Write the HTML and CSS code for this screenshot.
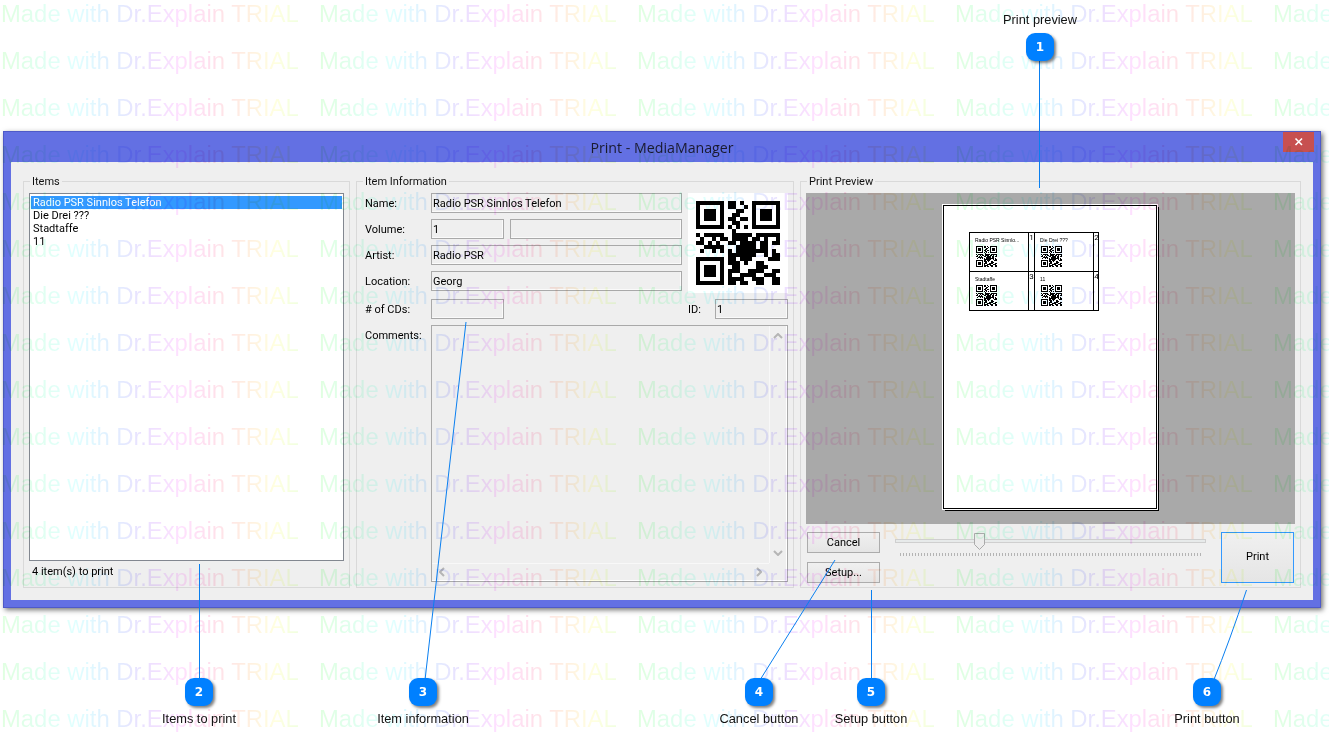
FILE: index.html
```html
<!DOCTYPE html>
<html lang="en">

<head>
    <meta charset="UTF-8">
    <meta name="viewport" content="width=device-width, initial-scale=1.0">
    <title>Print - MediaManager</title>
    <link rel="stylesheet" href="styles.css">
</head>

<body>
    <div class="page">
        <div class="dialog">
            <div class="titleBar">
                <span class="titleText">Print - MediaManager</span>
                <button class="closeBtn" aria-label="Close">
                    <svg width="10" height="10" viewBox="0 0 10 10">
                        <path d="M1.5 1.5 L8 8 M8 1.5 L1.5 8" stroke="#fff" stroke-width="1.6" fill="none" />
                    </svg>
                </button>
            </div>
            <div class="client">
                <fieldset class="group itemsGroup">
                    <legend>Items</legend>
                    <ul class="itemList">
                        <li class="selected">Radio PSR Sinnlos Telefon</li>
                        <li>Die Drei ???</li>
                        <li>Stadtaffe</li>
                        <li>11</li>
                    </ul>
                    <div class="itemCount">4 item(s) to print</div>
                </fieldset>

                <fieldset class="group infoGroup">
                    <legend>Item Information</legend>
                    <div class="infoGrid">
                        <span class="fieldLabel">Name:</span>
                        <div class="field fieldWide">Radio PSR Sinnlos Telefon</div>
                        <svg class="qrBig" data-qr viewBox="-2 -2 25 25" shape-rendering="crispEdges"></svg>

                        <span class="fieldLabel">Volume:</span>
                        <div class="field fieldShort">1</div>
                        <div class="field fieldRest"></div>

                        <span class="fieldLabel">Artist:</span>
                        <div class="field fieldWide">Radio PSR</div>

                        <span class="fieldLabel">Location:</span>
                        <div class="field fieldWide">Georg</div>

                        <span class="fieldLabel"># of CDs:</span>
                        <div class="field fieldShort"></div>
                        <span class="fieldLabel idLabel">ID:</span>
                        <div class="field idField">1</div>

                        <span class="fieldLabel">Comments:</span>
                        <div class="comments">
                            <div class="scrollV">
                                <svg width="10" height="6" viewBox="0 0 10 6"><path d="M1 5 L5 1 L9 5" /></svg>
                                <svg width="10" height="6" viewBox="0 0 10 6"><path d="M1 1 L5 5 L9 1" /></svg>
                            </div>
                            <div class="scrollH">
                                <svg width="6" height="10" viewBox="0 0 6 10"><path d="M5 1 L1 5 L5 9" /></svg>
                                <svg width="6" height="10" viewBox="0 0 6 10"><path d="M1 1 L5 5 L1 9" /></svg>
                            </div>
                        </div>
                    </div>
                </fieldset>

                <fieldset class="group previewGroup">
                    <legend>Print Preview</legend>
                    <div class="preview">
                        <div class="sheet">
                            <div class="labels">
                                <div class="labelCell">
                                    <div class="labelBody">
                                        <span class="labelName">Radio PSR Sinnlo...</span>
                                        <svg class="qrSmall" data-qr viewBox="0 0 21 21" shape-rendering="crispEdges"></svg>
                                    </div>
                                    <span class="labelNum">1</span>
                                </div>
                                <div class="labelCell">
                                    <div class="labelBody">
                                        <span class="labelName">Die Drei ???</span>
                                        <svg class="qrSmall" data-qr viewBox="0 0 21 21" shape-rendering="crispEdges"></svg>
                                    </div>
                                    <span class="labelNum">2</span>
                                </div>
                                <div class="labelCell">
                                    <div class="labelBody">
                                        <span class="labelName">Stadtaffe</span>
                                        <svg class="qrSmall" data-qr viewBox="0 0 21 21" shape-rendering="crispEdges"></svg>
                                    </div>
                                    <span class="labelNum">3</span>
                                </div>
                                <div class="labelCell">
                                    <div class="labelBody">
                                        <span class="labelName">11</span>
                                        <svg class="qrSmall" data-qr viewBox="0 0 21 21" shape-rendering="crispEdges"></svg>
                                    </div>
                                    <span class="labelNum">4</span>
                                </div>
                            </div>
                        </div>
                    </div>
                    <div class="controls">
                        <div class="btnColumn">
                            <button class="winBtn">Cancel</button>
                            <button class="winBtn">Setup...</button>
                        </div>
                        <div class="slider">
                            <div class="sliderTrack">
                                <svg class="sliderThumb" width="12" height="18" viewBox="0 0 12 18">
                                    <path d="M0.5 0.5 H10.5 V11.5 L5.5 16.5 L0.5 11.5 Z" fill="#ececec" stroke="#aaa" />
                                </svg>
                            </div>
                            <div class="sliderTicks"></div>
                        </div>
                        <button class="winBtn printBtn">Print</button>
                    </div>
                </fieldset>
            </div>
        </div>
    </div>

    <div class="watermark" id="watermark"></div>

    <!-- callouts sit on top of the screenshot -->
    <svg class="leaders" width="1329" height="743" viewBox="0 0 1329 743">
        <path d="M1039.5 60 V188" />
        <path d="M199.5 564 V680" />
        <path d="M466 322 L425 680" />
        <path d="M835 560 L760 680" />
        <path d="M871.5 590 V680" />
        <path d="M1246.5 590 Q1230 640 1213 682" />
    </svg>

    <div class="callout pin1">1</div>
    <div class="callout pin2">2</div>
    <div class="callout pin3">3</div>
    <div class="callout pin4">4</div>
    <div class="callout pin5">5</div>
    <div class="callout pin6">6</div>

    <div class="calloutLabel pin1Label">Print preview</div>
    <div class="calloutLabel pin2Label">Items to print</div>
    <div class="calloutLabel pin3Label">Item information</div>
    <div class="calloutLabel pin4Label">Cancel button</div>
    <div class="calloutLabel pin5Label">Setup button</div>
    <div class="calloutLabel pin6Label">Print button</div>

    <script src="script.js"></script>
</body>

</html>
```

FILE: styles.css
```css
html,
body {
    margin: 0;
    padding: 0;
    background-color: #fff;
    overflow: hidden;
}

body {
    width: 1329px;
    height: 743px;
    position: relative;
    font-family: Roboto, "Liberation Sans", Arial, sans-serif;
    font-size: 11px;
    color: #000;
}

.page {
    padding: 131px 0 0 3px;
}

/* window frame */
.dialog {
    width: 1318px;
    height: 477px;
    box-sizing: border-box;
    background-color: #6370e3;
    border: 1px solid #4f5ac8;
    box-shadow: 2px 2px 5px rgba(0, 0, 0, 0.55);
    display: flex;
    flex-direction: column;
}

.titleBar {
    height: 30px;
    flex: none;
    display: flex;
    align-items: center;
    justify-content: center;
    position: relative;
}

.titleText {
    font-family: "Open Sans", sans-serif;
    font-size: 14.2px;
    color: #1a1a30;
}

.closeBtn {
    position: absolute;
    top: 0;
    right: 6px;
    width: 31px;
    height: 20px;
    border: none;
    padding: 0;
    background-color: #c75050;
    display: flex;
    align-items: center;
    justify-content: center;
}

.client {
    flex: 1;
    margin: 0 7px 7px;
    background-color: #efefef;
    display: flex;
    gap: 6px;
    padding: 12px;
    box-sizing: border-box;
    min-height: 0;
}

.group {
    margin: 0;
    padding: 0 5px 5px;
    border: 1px solid #d9d9d9;
    box-sizing: border-box;
    min-width: 0;
    display: flex;
    flex-direction: column;
}

.group legend {
    padding: 0 2px;
    margin-left: 1px;
    height: 14px;
    line-height: 16px;
    color: #111;
}

.itemsGroup {
    width: 327px;
}

.infoGroup {
    width: 438px;
    padding-left: 8px;
}

.infoGroup legend {
    margin-left: -2px;
}

.previewGroup {
    width: 501px;
}

.itemList {
    list-style: none;
    margin: 5px 0 0;
    padding: 1px;
    flex: 1;
    background-color: #fff;
    border: 1px solid #828790;
}

.itemList li {
    height: 13px;
    line-height: 13px;
    padding-left: 2px;
    position: relative;
    top: 1px;
}

.itemList .selected {
    background-color: #3399ff;
    color: #fff;
}

.itemCount {
    height: 21px;
    line-height: 21px;
    padding-left: 3px;
}

.infoGrid {
    margin-top: 5px;
    flex: 1;
    display: grid;
    grid-template-columns: 66px 73px 6px 172px 6px 27px 73px;
    grid-template-rows: 20px 20px 20px 22px 20px 1fr;
    row-gap: 6px;
    align-items: start;
}

.fieldLabel {
    grid-column: 1;
    line-height: 22px;
    white-space: nowrap;
}

.field {
    height: 20px;
    box-sizing: border-box;
    border: 1px solid #a9a9a9;
    box-shadow: inset -1px -1px 0 #fafafa;
    line-height: 20px;
    padding-left: 1px;
}

.fieldWide {
    grid-column: 2 / 5;
}

.fieldShort {
    grid-column: 2;
}

.fieldRest {
    grid-column: 4;
}

.idLabel {
    grid-column: 6;
}

.idField {
    grid-column: 7;
}

.qrBig {
    grid-column: 6 / 8;
    grid-row: 1 / 5;
    width: 100px;
    height: 100px;
    background-color: #fff;
}

.comments {
    grid-column: 2 / 8;
    align-self: stretch;
    box-sizing: border-box;
    border: 1px solid #a9a9a9;
    box-shadow: inset -1px -1px 0 #fff;
    position: relative;
}

.scrollV {
    position: absolute;
    top: 0;
    right: 1px;
    bottom: 18px;
    width: 17px;
    box-sizing: border-box;
    border-left: 1px solid #f8f8f8;
    display: flex;
    flex-direction: column;
    justify-content: space-between;
    align-items: center;
    padding: 7px 0;
}

.scrollH {
    position: absolute;
    left: 0;
    right: 18px;
    bottom: 1px;
    height: 17px;
    box-sizing: border-box;
    border-top: 1px solid #f8f8f8;
    display: flex;
    justify-content: space-between;
    align-items: center;
    padding: 0 7px;
}

.comments path {
    fill: none;
    stroke: #b5b5b5;
    stroke-width: 2;
}

.preview {
    margin-top: 5px;
    height: 331px;
    flex: none;
    background-color: #a9a9a9;
    padding: 12px 0 0 137px;
    box-sizing: border-box;
}

.sheet {
    width: 214px;
    height: 304px;
    box-sizing: border-box;
    background-color: #fff;
    border: 1px solid #000;
    outline: 1px solid #fff;
    box-shadow: 2px 2px 0 #000;
    padding: 26px 0 0 25px;
}

.labels {
    width: 130px;
    height: 79px;
    box-sizing: border-box;
    border: 1px solid #000;
    display: grid;
    grid-template-columns: 65px 64px;
    grid-template-rows: 39px 38px;
}

.labelCell {
    display: flex;
    border-right: 1px solid #000;
    border-bottom: 1px solid #000;
}

.labelCell:nth-child(2n) {
    border-right: none;
}

.labelCell:nth-child(n+3) {
    border-bottom: none;
}

.labelBody {
    flex: 1;
    padding: 4px 0 0 5px;
    display: flex;
    flex-direction: column;
    align-items: flex-start;
    border-right: 1px solid #000;
}

.labelName {
    font-family: "Liberation Sans", sans-serif;
    font-size: 5px;
    line-height: 6px;
    white-space: nowrap;
}

.qrSmall {
    width: 21px;
    height: 21px;
    margin: 3px 0 0 1px;
}

.labelNum {
    width: 5px;
    font-size: 8px;
    line-height: 9px;
    text-align: center;
}

.controls {
    margin: 8px 1px 0;
    display: flex;
    gap: 15px;
}

.btnColumn {
    display: flex;
    flex-direction: column;
    gap: 9px;
}

.winBtn {
    width: 73px;
    height: 21px;
    padding: 0 0 1px;
    font-family: inherit;
    font-size: inherit;
    color: #000;
    border: 1px solid #acacac;
    background: linear-gradient(#f0f0f0, #e5e5e5);
}

.printBtn {
    height: 51px;
    padding-bottom: 2px;
    border-color: #3399ff;
}

.slider {
    flex: 1;
    padding-top: 7px;
}

.sliderTrack {
    height: 4px;
    box-sizing: border-box;
    background-color: #e7eaea;
    border: 1px solid #cfcfcf;
    position: relative;
}

.sliderThumb {
    position: absolute;
    left: 78px;
    top: -7px;
}

.sliderTicks {
    margin: 10px 5px 0;
    height: 3px;
    background-image: repeating-linear-gradient(90deg, #b4b4b4 0, #b4b4b4 1px, transparent 1px, transparent 3px);
}

/* repeated trial stamp across the whole shot */
.watermark {
    position: absolute;
    inset: 0;
    overflow: hidden;
    display: grid;
    grid-template-columns: repeat(5, 318px);
    grid-auto-rows: 47px;
    mix-blend-mode: multiply;
    opacity: 0.6;
    pointer-events: none;
}

.stamp {
    justify-self: start;
    height: 27px;
    line-height: 27px;
    margin-left: 1px;
    font-family: "Liberation Sans", sans-serif;
    font-size: 23.85px;
    white-space: nowrap;
    background-image: linear-gradient(90deg, #ccffcc 0%, #ccffff 25%, #cce6ff 36%, #dcccff 48%, #ffccff 60%, #ffccdd 72%, #ffe2cc 82%, #ffffcc 92%, #e6ffcc 100%);
    -webkit-background-clip: text;
    background-clip: text;
    color: transparent;
}

.leaders {
    position: absolute;
    left: 0;
    top: 0;
    pointer-events: none;
}

.leaders path {
    fill: none;
    stroke: #0a7ff0;
    stroke-width: 1;
}

.callout {
    position: absolute;
    top: 678px;
    width: 28px;
    height: 28px;
    border-radius: 9px;
    background-color: #0080ff;
    box-shadow: 2px 2px 3px rgba(0, 0, 0, 0.5);
    color: #fff;
    font-family: "DejaVu Sans", sans-serif;
    font-weight: bold;
    font-size: 12px;
    line-height: 28px;
    text-align: center;
}

.pin1 {
    left: 1026px;
    top: 33px;
}

.pin2 {
    left: 185px;
}

.pin3 {
    left: 409px;
}

.pin4 {
    left: 745px;
}

.pin5 {
    left: 857px;
}

.pin6 {
    left: 1193px;
}

.calloutLabel {
    position: absolute;
    top: 712px;
    transform: translateX(-50%);
    font-family: "Liberation Sans", sans-serif;
    font-size: 12.8px;
    line-height: 14px;
    white-space: nowrap;
    color: #111;
}

.pin1Label {
    left: 1040px;
    top: 13px;
}

.pin2Label {
    left: 199px;
}

.pin3Label {
    left: 423px;
}

.pin4Label {
    left: 759px;
}

.pin5Label {
    left: 871px;
}

.pin6Label {
    left: 1207px;
}
```

FILE: script.js
```js
// QR module rows, read off the dialog
const qrRows = [
    '111111101101001111111',
    '100000101100101000001',
    '101110100011001011101',
    '101110100110001011101',
    '101110101101101011101',
    '100000100110001000001',
    '111111101010101111111',
    '000000000100000000000',
    '101111100111110111111',
    '010010110111101101001',
    '110101001101111011011',
    '001111100011111011000',
    '010010101011111111010',
    '000000001111111001011',
    '111111101101110000111',
    '100000101110100110000',
    '101110100110000111000',
    '101110101110011110011',
    '101110101001111001110',
    '100000101111001110011',
    '111111101101100110011'
];

function drawQr(svg) {
    let d = '';
    qrRows.forEach((row, y) => {
        row.split('').forEach((cell, x) => {
            if (cell === '1') {
                d += `M${x} ${y}h1v1h-1z`;
            }
        });
    });
    const path = document.createElementNS('http://www.w3.org/2000/svg', 'path');
    path.setAttribute('d', d);
    svg.appendChild(path);
}

document.querySelectorAll('[data-qr]').forEach(drawQr);

const watermark = document.getElementById('watermark');
for (let i = 0; i < 80; i++) {
    const stamp = document.createElement('span');
    stamp.className = 'stamp';
    stamp.textContent = 'Made with Dr.Explain TRIAL';
    watermark.appendChild(stamp);
}
```
